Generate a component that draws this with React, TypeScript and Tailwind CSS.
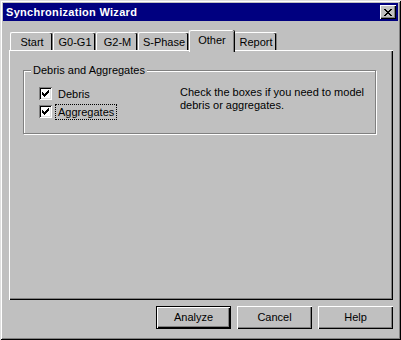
import React from 'react';

const font = { fontFamily: '"Liberation Sans", Arial, sans-serif' };

const tabs = [
  { label: 'Start', w: 'w-[43px]' },
  { label: 'G0-G1', w: 'w-[43px]' },
  { label: 'G2-M', w: 'w-[42px]' },
  { label: 'S-Phase', w: 'w-[51px]' },
  { label: 'Other', w: 'w-[45px]', active: true },
  { label: 'Report', w: 'w-[43px]' },
];

function CheckBox({ label, focused }: { label: string; focused?: boolean }) {
  return (
    <div className="flex items-center h-[13px]">
      <div className="w-[13px] h-[13px] bg-white shadow-[inset_1px_1px_0_#808080,inset_-1px_-1px_0_#fff,inset_2px_2px_0_#000,inset_-2px_-2px_0_#dfdfdf] flex items-center justify-center">
        <svg width="7" height="7" viewBox="0 0 7 7" shapeRendering="crispEdges">
          <path
            d="M6 0h1v3h-1v1h-1v1h-1v1h-1v1h-1v-1h-1v-1h-1v-3h1v1h1v1h1v-1h1v-1h1z"
            fill="#000"
          />
        </svg>
      </div>
      <span
        className={`ml-[4px] px-[2px] leading-[14px] ${focused ? 'outline outline-1 outline-dotted outline-black' : ''}`}
      >
        {label}
      </span>
    </div>
  );
}

function Button({ label, isDefault }: { label: string; isDefault?: boolean }) {
  return (
    <button
      className={`w-[75px] h-[23px] bg-[#c0c0c0] text-black text-[11px] flex items-center justify-center ${
        isDefault
          ? 'shadow-[inset_0_0_0_1px_#000,inset_2px_2px_0_#fff,inset_-2px_-2px_0_#000,inset_-3px_-3px_0_#808080]'
          : 'shadow-[inset_1px_1px_0_#fff,inset_-1px_-1px_0_#000,inset_-2px_-2px_0_#808080]'
      }`}
    >
      {label}
    </button>
  );
}

export default function App() {
  return (
    <div
      style={font}
      className="w-[401px] h-[340px] bg-[#c0c0c0] p-[3px] flex flex-col text-[11px] text-black shadow-[inset_1px_1px_0_#dfdfdf,inset_-1px_-1px_0_#000,inset_2px_2px_0_#fff,inset_-2px_-2px_0_#808080]"
    >
      {/* Title bar */}
      <div className="h-[18px] bg-[#000080] flex items-center justify-between pl-[3px] pr-[2px]">
        <span className="text-white font-bold text-[11px] tracking-[0.3px]">Synchronization Wizard</span>
        <div className="w-[16px] h-[14px] bg-[#c0c0c0] flex items-center justify-center shadow-[inset_1px_1px_0_#fff,inset_-1px_-1px_0_#000,inset_-2px_-2px_0_#808080]">
          <svg width="8" height="7" viewBox="0 0 8 7" shapeRendering="crispEdges">
            <path d="M0 0h2v1h1v1h2v-1h1v-1h2v1h-1v1h-1v1h-1v1h1v1h1v1h1v1h-2v-1h-1v-1h-2v1h-1v1h-2v-1h1v-1h1v-1h1v-1h-1v-1h-1v-1h-1z" fill="#000" />
          </svg>
        </div>
      </div>

      {/* Tabs */}
      <div className="mt-[9px] ml-[7px] flex items-end h-[20px]">
        {tabs.map((t) =>
          t.active ? (
            <div
              key={t.label}
              className={`${t.w} h-[22px] -mb-[2px] relative z-10 bg-[#c0c0c0] border-t border-l border-white rounded-t-[2px] shadow-[inset_-1px_0_0_#808080,1px_0_0_#000] flex justify-center pt-[3px] leading-[13px]`}
            >
              {t.label}
            </div>
          ) : (
            <div
              key={t.label}
              className={`${t.w} h-[18px] bg-[#c0c0c0] border-t border-l border-white rounded-t-[2px] shadow-[inset_-1px_0_0_#808080,inset_-2px_0_0_#000] flex justify-center pt-[3px] leading-[13px]`}
            >
              {t.label}
            </div>
          )
        )}
      </div>

      {/* Tab panel */}
      <div className="ml-[6px] mr-[5px] h-[250px] shadow-[inset_1px_1px_0_#fff,inset_-1px_-1px_0_#000,inset_-2px_-2px_0_#808080] pt-[20px] px-[15px]">
        <div className="relative border border-[#808080] shadow-[inset_1px_1px_0_#fff,1px_1px_0_#fff] h-[64px] w-[353px] ml-[-1px]">
          <span className="absolute left-[7px] -top-[7px] bg-[#c0c0c0] px-[2px] leading-[13px]">
            Debris and Aggregates
          </span>
          <div className="flex pt-[16px]">
            <div className="ml-[15px] w-[141px] flex flex-col gap-[5px]">
              <CheckBox label="Debris" />
              <CheckBox label="Aggregates" focused />
            </div>
            <div className="leading-[13px] -mt-[1px]">
              Check the boxes if you need to model
              <br />
              debris or aggregates.
            </div>
          </div>
        </div>
      </div>

      {/* Buttons */}
      <div className="flex justify-end gap-[6px] mt-[6px] mr-[5px]">
        <Button label="Analyze" isDefault />
        <Button label="Cancel" />
        <Button label="Help" />
      </div>
    </div>
  );
}
